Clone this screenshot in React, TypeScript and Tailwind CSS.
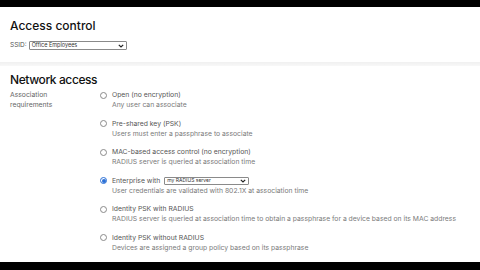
import React from "react";

const options = [
  { label: "Open (no encryption)", desc: "Any user can associate" },
  { label: "Pre-shared key (PSK)", desc: "Users must enter a passphrase to associate" },
  { label: "MAC-based access control (no encryption)", desc: "RADIUS server is queried at association time" },
  { label: "Enterprise with", desc: "User credentials are validated with 802.1X at association time", select: true, checked: true },
  { label: "Identity PSK with RADIUS", desc: "RADIUS server is queried at association time to obtain a passphrase for a device based on its MAC address" },
  { label: "Identity PSK without RADIUS", desc: "Devices are assigned a group policy based on its passphrase" },
];

function Radio({ checked }: { checked?: boolean }) {
  return checked ? (
    <div className="w-[7px] h-[7px] rounded-full border border-[#2a6fd6] bg-white flex items-center justify-center">
      <div className="w-[4px] h-[4px] rounded-full bg-[#2a6fd6]" />
    </div>
  ) : (
    <div className="w-[7px] h-[7px] rounded-full border border-[#8a8a8a] bg-white" />
  );
}

function Chevron() {
  return (
    <svg width="6" height="4" viewBox="0 0 6 4" className="shrink-0 block">
      <path d="M0.8 0.8 L3 3 L5.2 0.8" stroke="#222" strokeWidth="1.2" fill="none" />
    </svg>
  );
}

export default function App() {
  return (
    <div className="w-[480px] h-[270px] bg-black flex flex-col leading-none" style={{ fontFamily: "Inter, 'Noto Sans', sans-serif" }}>
      <div className="h-[7px] bg-black shrink-0" />
      <div className="flex-1 bg-white flex flex-col overflow-hidden">
        <div className="px-[10px] pt-[11px] h-[55px]">
          <div className="text-[12px] font-medium text-[#111] leading-[16px]">Access control</div>
          <div className="flex items-center mt-[7px] h-[9px]">
            <span className="text-[6.5px] text-[#555] mr-[2px] leading-none">SSID:</span>
            <div className="w-[98px] h-[9px] border border-[#8a8a8a] rounded-[1px] flex items-center justify-between px-[2px]">
              <span className="text-[5.5px] text-[#333] leading-none">Office Employees</span>
              <Chevron />
            </div>
          </div>
        </div>
        <div className="h-[4px] bg-gradient-to-b from-[#f0f0f0] to-[#f8f8f8]" />
        <div className="px-[10px] pt-[6px]">
          <div className="text-[12px] font-medium text-[#111] leading-[16px] tracking-[-0.4px]">Network access</div>
          <div className="flex mt-[2px]">
            <div className="w-[90px] text-[6.8px] leading-[10px] text-[#666]">
              Association<br />requirements
            </div>
            <div className="flex flex-col gap-[8.5px]">
              {options.map((o, i) => (
                <div key={i} className="flex">
                  <div className="w-[12px] pt-[1.5px]">
                    <Radio checked={o.checked} />
                  </div>
                  <div className="flex flex-col">
                    <div className="flex items-center h-[10px] text-[6.8px] text-[#555] leading-[10px] font-normal">
                      <span>{o.label}</span>
                      {o.select && (
                        <div className="ml-[4px] w-[85px] h-[8px] border border-[#8a8a8a] rounded-[1px] flex items-center justify-between px-[2px]">
                          <span className="text-[5px] text-[#333] leading-none">my RADIUS server</span>
                          <Chevron />
                        </div>
                      )}
                    </div>
                    <div className="text-[6.8px] text-[#7a7a7a] leading-[10px]">{o.desc}</div>
                  </div>
                </div>
              ))}
            </div>
          </div>
        </div>
      </div>
      <div className="h-[8px] bg-black shrink-0" />
    </div>
  );
}
